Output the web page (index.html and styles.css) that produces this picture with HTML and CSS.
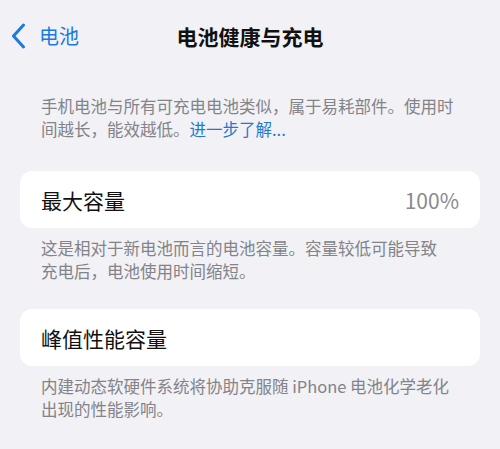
FILE: index.html
```html
<!DOCTYPE html>
<html lang="zh-CN">
<head>
<meta charset="utf-8">
<title>电池健康与充电</title>
<link rel="stylesheet" href="styles.css">
</head>
<body>
<div class="page">
  <header class="nav">
    <a class="back" href="#">
      <svg class="chev" viewBox="0 0 15 26" width="15" height="26" aria-hidden="true">
        <path d="M12.5 2 L2.5 13 L12.5 24" fill="none" stroke="currentColor" stroke-width="3" stroke-linecap="round" stroke-linejoin="round"/>
      </svg>
      <span>电池</span>
    </a>
    <h1 class="title">电池健康与充电</h1>
    <span class="spacer"></span>
  </header>

  <p class="note note-top">手机电池与所有可充电电池类似，属于易耗部件。使用时<br>间越长，能效越低。<a class="link" href="#">进一步了解...</a></p>

  <div class="card">
    <span class="label">最大容量</span>
    <span class="value">100%</span>
  </div>
  <p class="note note-mid">这是相对于新电池而言的电池容量。容量较低可能导致<br>充电后，电池使用时间缩短。</p>

  <div class="card card-2">
    <span class="label">峰值性能容量</span>
  </div>
  <p class="note note-mid">内建动态软硬件系统将协助克服随 iPhone 电池化学老化<br>出现的性能影响。</p>
</div>
</body>
</html>
```

FILE: styles.css
```css
html, body {
  margin: 0;
  padding: 0;
  background: #f1f1f6;
}
body {
  font-family: "Noto Sans CJK SC", "Noto Sans", sans-serif;
  color: #111;
}
.page {
  width: 500px;
  height: 449px;
  overflow: hidden;
}
.nav {
  height: 72px;
  display: grid;
  grid-template-columns: 1fr auto 1fr;
  align-items: center;
}
.back {
  display: flex;
  align-items: center;
  gap: 13px;
  padding-left: 11px;
  color: #1b7ade;
  text-decoration: none;
  font-size: 20px;
  line-height: 1;
}
.chev {
  display: block;
}
.title {
  margin: 0;
  font-size: 21px;
  font-weight: 600;
  line-height: 1;
  color: #111;
}
.note {
  margin: 0;
  padding: 0 41px;
  font-size: 16.5px;
  line-height: 23px;
  color: #838388;
  white-space: nowrap;
}
.note-top {
  margin-top: 23px;
  margin-bottom: 30px;
}
.note-mid {
  margin-top: 9px;
  margin-bottom: 26px;
}
.link {
  color: #2479cf;
  text-decoration: none;
}
.card {
  margin: 0 20px;
  height: 57px;
  padding: 0 21px;
  background: #fff;
  border-radius: 12px;
  display: flex;
  align-items: center;
  justify-content: space-between;
}
.label {
  font-size: 21px;
  color: #111;
}
.value {
  font-size: 21px;
  color: #8a8a8f;
}
```
